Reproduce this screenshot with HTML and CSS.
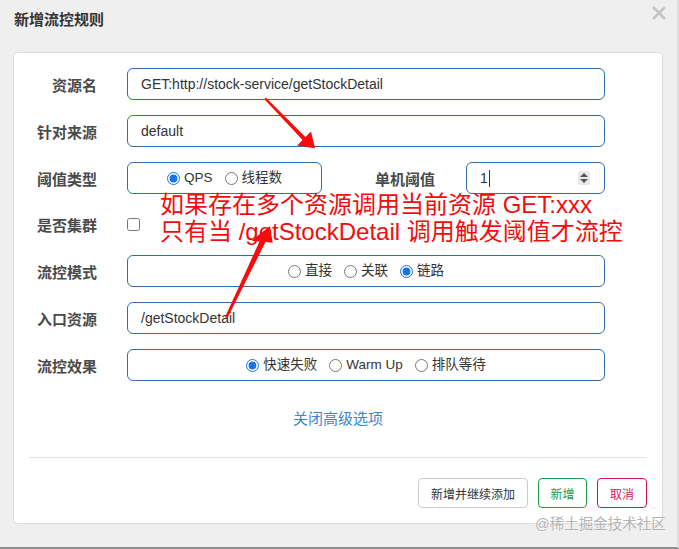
FILE: index.html
```
<!DOCTYPE html>
<html lang="zh-CN">
<head>
<meta charset="utf-8">
<title>新增流控规则</title>
<link rel="stylesheet" href="styles.css">
</head>
<body>
<div class="page">
  <div class="header">
    <div class="title">新增流控规则</div>
    <svg class="close" width="14" height="14" viewBox="0 0 14 14"><path d="M2 2L12 12M12 2L2 12" stroke="#c4c4c4" stroke-width="2.6" stroke-linecap="square"/></svg>
  </div>
  <div class="card">
    <div class="form">
      <div class="row">
        <div class="label">资源名</div>
        <div class="field">GET:http://stock-service/getStockDetail</div>
      </div>
      <div class="row">
        <div class="label">针对来源</div>
        <div class="field">default</div>
      </div>
      <div class="row">
        <div class="label">阈值类型</div>
        <div class="pair">
          <div class="field radios small">
            <label class="opt"><input type="radio" name="grade" checked>QPS</label>
            <label class="opt"><input type="radio" name="grade">线程数</label>
          </div>
          <div class="label label2">单机阈值</div>
          <div class="field number"><span class="num">1<span class="caret"></span></span><span class="spin"><span class="up"></span><span class="down"></span></span></div>
        </div>
      </div>
      <div class="row row-check">
        <div class="label">是否集群</div>
        <div class="check"><input type="checkbox"></div>
      </div>
      <div class="row">
        <div class="label">流控模式</div>
        <div class="field radios">
          <label class="opt"><input type="radio" name="mode">直接</label>
          <label class="opt"><input type="radio" name="mode">关联</label>
          <label class="opt"><input type="radio" name="mode" checked>链路</label>
        </div>
      </div>
      <div class="row">
        <div class="label">入口资源</div>
        <div class="field">/getStockDetail</div>
      </div>
      <div class="row">
        <div class="label">流控效果</div>
        <div class="field radios">
          <label class="opt"><input type="radio" name="effect" checked>快速失败</label>
          <label class="opt"><input type="radio" name="effect">Warm Up</label>
          <label class="opt"><input type="radio" name="effect">排队等待</label>
        </div>
      </div>
    </div>
    <div class="advanced"><a class="link">关闭高级选项</a></div>
    <div class="divider"></div>
    <div class="actions">
      <button class="btn btn-default">新增并继续添加</button>
      <button class="btn btn-success">新增</button>
      <button class="btn btn-danger">取消</button>
    </div>
  </div>

  <div class="note">如果存在多个资源调用当前资源 GET:xxx<br>只有当 /getStockDetail 调用触发阈值才流控</div>
  <svg class="arrows" width="679" height="549" viewBox="0 0 679 549">
    <polygon fill="#f50c0c" points="265.8,97.6 305.4,137.1 311,131.5 315,148.2 297,145.5 302.6,139.9 264.4,99.2"/>
    <polygon fill="#f50c0c" points="225,317.2 259.5,241.5 251.7,240.7 270,226 272.7,242.7 265.5,242 227.6,317.8"/>
  </svg>
  <div class="watermark">@稀土掘金技术社区</div>
</div>
</body>
</html>
```

FILE: styles.css
```
* { box-sizing: border-box; }
html, body { margin: 0; padding: 0; }
body {
  background: #efefef;
  font-family: "Liberation Sans", "Noto Sans CJK SC", sans-serif;
  color: #333;
}
.page {
  position: relative;
  width: 679px;
  height: 549px;
  overflow: hidden;
  border-right: 2px solid #e0e0e0;
  border-bottom: 2px solid #8e8e8e;
}
.header {
  height: 52px;
  padding: 10px 0 0 14px;
  display: flex;
  justify-content: space-between;
  align-items: flex-start;
}
.title {
  font-size: 15px;
  line-height: 20px;
  font-weight: bold;
  color: #333;
}
.close { margin: 0 11px 0 0; position: relative; top: -4px; }
.card {
  margin-left: 13px;
  width: 650px;
  height: 472px;
  background: #fff;
  border: 1px solid #dcdcdc;
  border-radius: 5px;
}
.form {
  padding: 15px 57px 0 0;
  display: flex;
  flex-direction: column;
  gap: 15px;
}
.row {
  display: grid;
  grid-template-columns: 83px 1fr;
  column-gap: 30px;
  align-items: center;
  min-height: 32px;
}
.row-check { min-height: 31px; height: 31px; }
.label {
  text-align: right;
  font-size: 15px;
  font-weight: bold;
  color: #4a4a4a;
  white-space: nowrap;
}
.field {
  height: 32px;
  border: 1px solid #2f6ea8;
  border-radius: 6px;
  padding: 0 13px;
  font-size: 14px;
  line-height: 30px;
  color: #333;
  white-space: nowrap;
}
.pair {
  display: flex;
  align-items: center;
}
.small { width: 195px; flex: none; }
.label2 { width: 113px; flex: none; }
.number {
  margin-left: 31px;
  flex: 1;
  display: flex;
  justify-content: space-between;
  align-items: center;
  padding-right: 14px;
}
.num { display: inline-flex; align-items: center; }
.caret { display: inline-block; width: 1px; height: 17px; background: #333; margin-left: 1px; }
.spin {
  width: 12px;
  height: 14px;
  background: #e9e9e9;
  border-radius: 2px;
  display: flex;
  flex-direction: column;
  align-items: center;
  justify-content: center;
  gap: 2px;
}
.up { width: 0; height: 0; border-left: 4px solid transparent; border-right: 4px solid transparent; border-bottom: 4px solid #555; }
.down { width: 0; height: 0; border-left: 4px solid transparent; border-right: 4px solid transparent; border-top: 4px solid #555; }
.radios {
  display: flex;
  justify-content: center;
  align-items: center;
  gap: 12px;
  font-size: 13.5px;
  padding: 0 4px;
}
.opt {
  display: inline-flex;
  align-items: center;
  color: #333;
}
.opt input {
  margin: 0 4px 0 0;
  width: 13px;
  height: 13px;
  accent-color: #1a73e8;
}
.check { height: 31px; display: flex; align-items: center; }
.check input { margin: 0; width: 13px; height: 13px; }
.advanced {
  margin-top: 28px;
  text-align: center;
  line-height: 20px;
}
.link {
  font-size: 15px;
  color: #3a86c8;
  text-decoration: none;
}
.divider {
  margin: 28px 15px 0 15px;
  height: 1px;
  background: #e3e3e3;
}
.actions {
  display: flex;
  justify-content: flex-end;
  gap: 10px;
  padding: 20px 15px 0 0;
}
.btn {
  height: 30px;
  padding: 0;
  font-family: "Liberation Sans", "Noto Sans CJK SC", sans-serif;
  font-size: 12px;
  white-space: nowrap;
  text-align: center;
  background: #fff;
  border-radius: 4px;
  border: 1px solid #ccc;
  color: #333;
}
.btn-default { width: 110px; }
.btn-success { width: 49px; border-color: #1f9d4a; color: #1a9a3e; }
.btn-danger { width: 50px; border-color: #cf1557; color: #d0175a; }
.note {
  position: absolute;
  left: 160px;
  top: 191px;
  font-size: 24px;
  line-height: 27px;
  color: #f20d0d;
  white-space: nowrap;
}
.arrows { position: absolute; left: 0; top: 0; pointer-events: none; }
.watermark {
  position: absolute;
  left: 535px;
  top: 514px;
  font-size: 14.5px;
  line-height: 20px;
  color: #b3b3b3;
  text-shadow: 0 0 2px #fff;
  white-space: nowrap;
}
```
